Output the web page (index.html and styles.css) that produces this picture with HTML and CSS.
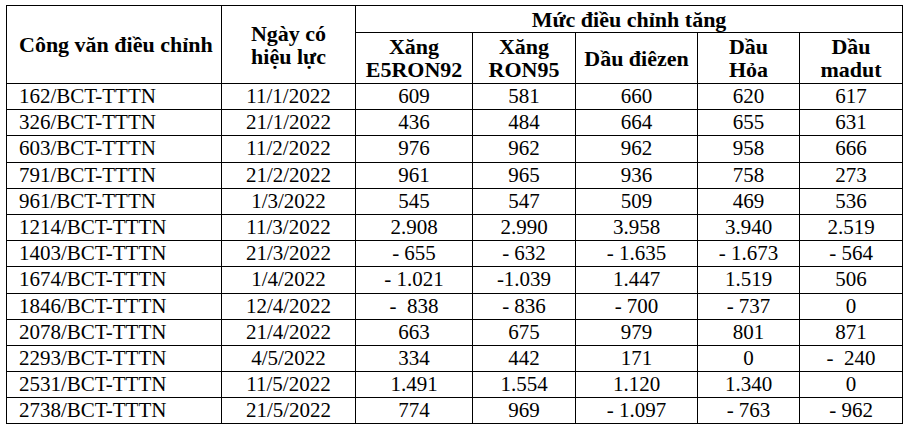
FILE: index.html
```html
<!DOCTYPE html>
<html lang="vi">
<head>
<meta charset="utf-8">
<link rel="stylesheet" href="styles.css">
</head>
<body>
<table class="grid">
  <colgroup>
    <col class="c1"><col class="c2"><col class="c3"><col class="c4"><col class="c5"><col class="c6"><col class="c7">
  </colgroup>
  <thead>
    <tr class="h1">
      <th rowspan="2" class="name">Công văn điều chỉnh</th>
      <th rowspan="2">Ngày có<br>hiệu lực</th>
      <th colspan="5">Mức điều chỉnh tăng</th>
    </tr>
    <tr class="h2">
      <th>Xăng<br>E5RON92</th>
      <th>Xăng<br>RON95</th>
      <th>Dầu điêzen</th>
      <th>Dầu<br>Hỏa</th>
      <th>Dầu<br>madut</th>
    </tr>
  </thead>
  <tbody>
    <tr><td class="name">162/BCT-TTTN</td><td>11/1/2022</td><td>609</td><td>581</td><td>660</td><td>620</td><td>617</td></tr>
    <tr><td class="name">326/BCT-TTTN</td><td>21/1/2022</td><td>436</td><td>484</td><td>664</td><td>655</td><td>631</td></tr>
    <tr><td class="name">603/BCT-TTTN</td><td>11/2/2022</td><td>976</td><td>962</td><td>962</td><td>958</td><td>666</td></tr>
    <tr><td class="name">791/BCT-TTTN</td><td>21/2/2022</td><td>961</td><td>965</td><td>936</td><td>758</td><td>273</td></tr>
    <tr><td class="name">961/BCT-TTTN</td><td>1/3/2022</td><td>545</td><td>547</td><td>509</td><td>469</td><td>536</td></tr>
    <tr><td class="name">1214/BCT-TTTN</td><td>11/3/2022</td><td>2.908</td><td>2.990</td><td>3.958</td><td>3.940</td><td>2.519</td></tr>
    <tr><td class="name">1403/BCT-TTTN</td><td>21/3/2022</td><td>- 655</td><td>- 632</td><td>- 1.635</td><td>- 1.673</td><td>- 564</td></tr>
    <tr><td class="name">1674/BCT-TTTN</td><td>1/4/2022</td><td>- 1.021</td><td>-1.039</td><td>1.447</td><td>1.519</td><td>506</td></tr>
    <tr><td class="name">1846/BCT-TTTN</td><td>12/4/2022</td><td>-&nbsp; 838</td><td>- 836</td><td>- 700</td><td>- 737</td><td>0</td></tr>
    <tr><td class="name">2078/BCT-TTTN</td><td>21/4/2022</td><td>663</td><td>675</td><td>979</td><td>801</td><td>871</td></tr>
    <tr><td class="name">2293/BCT-TTTN</td><td>4/5/2022</td><td>334</td><td>442</td><td>171</td><td>0</td><td>-&nbsp; 240</td></tr>
    <tr><td class="name">2531/BCT-TTTN</td><td>11/5/2022</td><td>1.491</td><td>1.554</td><td>1.120</td><td>1.340</td><td>0</td></tr>
    <tr><td class="name">2738/BCT-TTTN</td><td>21/5/2022</td><td>774</td><td>969</td><td>- 1.097</td><td>- 763</td><td>- 962</td></tr>
  </tbody>
</table>
</body>
</html>
```

FILE: styles.css
```css
html, body {
  margin: 0;
  padding: 0;
  background: #ffffff;
}
body {
  padding: 5px 0 0 6px;
  font-family: "Liberation Serif", "Times New Roman", serif;
  color: #000000;
}
.grid {
  border-collapse: collapse;
  table-layout: fixed;
  width: 896px;
  font-size: 21px;
}
.c1 { width: 215px; }
.c2 { width: 134px; }
.c3 { width: 117px; }
.c4 { width: 103px; }
.c5 { width: 122px; }
.c6 { width: 102px; }
.c7 { width: 103px; }
.grid th, .grid td {
  border: 1px solid #000000;
  padding: 0;
  text-align: center;
  vertical-align: middle;
  overflow: hidden;
  white-space: nowrap;
}
.grid th {
  font-size: 22px;
  font-weight: bold;
  line-height: 23px;
}
.grid td {
  height: 25.2px;
  line-height: 25px;
}
.h1 th { height: 26px; }
.h2 th { height: 50px; }
.grid .name {
  text-align: left;
  padding-left: 12px;
}
```
